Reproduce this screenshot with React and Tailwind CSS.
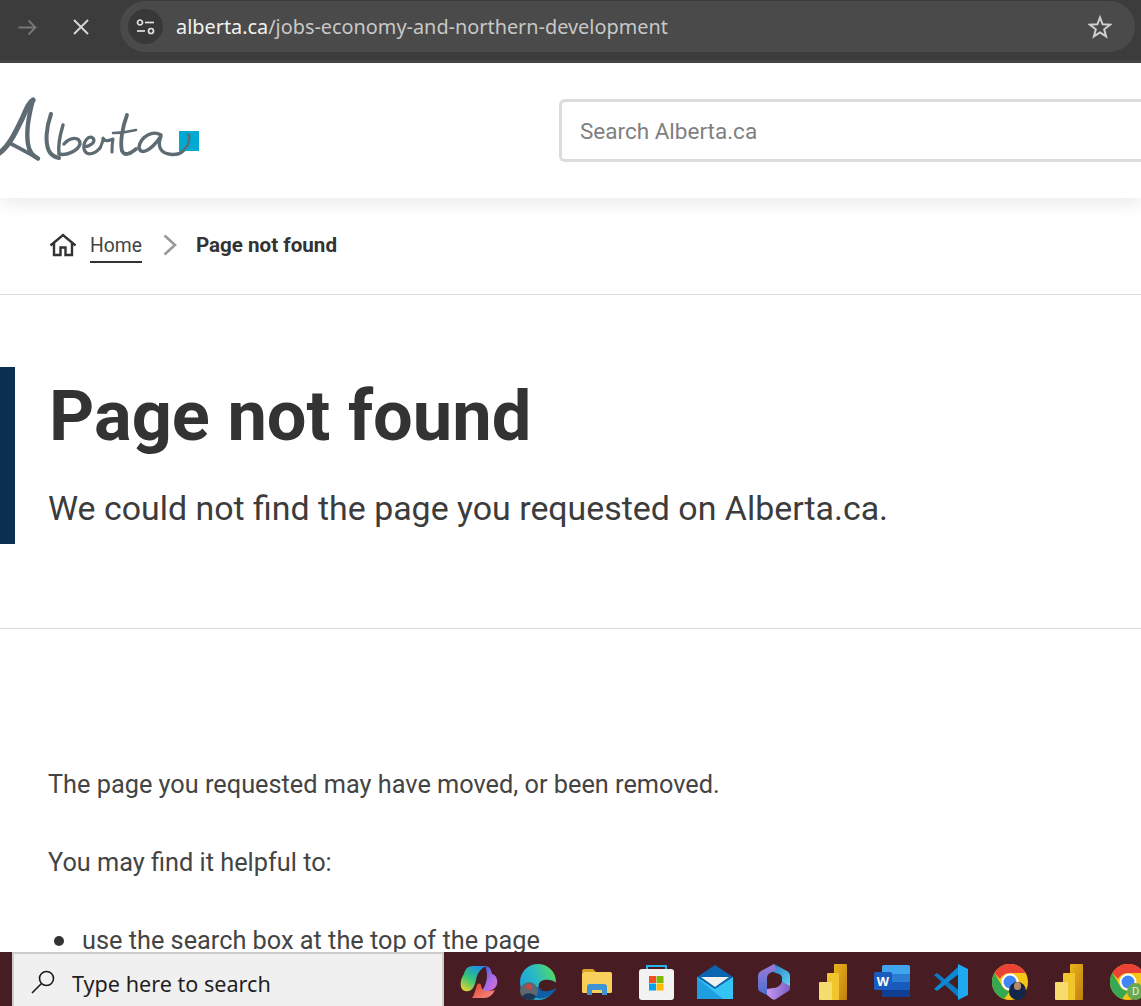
import React from "react";

const roboto = { fontFamily: "Roboto, sans-serif" };

function AlbertaLogo() {
  return (
    <svg width="200" height="70" viewBox="0 0 200 70" className="block">
      <g fill="none" stroke="#5f6b73" strokeLinecap="round" strokeLinejoin="round" transform="translate(0,-96)">
        <path d="M-2 154 C 9 147 16 131 22 119 C 26 110 29 102 33 100" strokeWidth="5.200" />
        <path d="M33 100 C 28 118 26 132 28 144 C 29 151 33 156 38 158.500" strokeWidth="4.400" />
        <path d="M9 143 C 18 147 28 153 38 158.500" strokeWidth="3.600" />
        <path d="M51 114 C 46 128 45 143 49 151 C 51 155 54 157 59 158" strokeWidth="4" />
        <path d="M63 125 C 60 135 58 146 59 154 C 66 156 78 151 80 144 C 80 136 70 137 64 144" strokeWidth="3.400" />
        <path d="M84 147 C 91 146 96 142 93 138 C 88 135 83 142 84 149 C 86 156 94 155 100 148" strokeWidth="3.200" />
        <path d="M100 148 C 102 144 103 140 103 138 C 105 142 108 141 113 139 C 112 144 112 148 112 152" strokeWidth="3" />
        <path d="M127 115 C 122 128 120 143 122 151 C 125 157 131 153 136 149" strokeWidth="3.800" />
        <path d="M113 133 C 120 133 128 132 136 130" strokeWidth="2.600" />
        <path d="M161 135 C 153 130 141 136 139 147 C 140 156 151 151 161 136 C 157 146 160 154 172 154.500 C 180 155 187 150 190 139" strokeWidth="3.400" />
      </g>
      <rect x="179" y="35" width="20" height="20" fill="#00aad2" />
      <path d="M186 37 C 190 42 188 50 179 56 C 187 56 192 47 190 38 Z" fill="#5f6b73" />
    </svg>
  );
}

function Copilot() {
  return (
    <svg width="38" height="34" viewBox="0 0 38 34">
      <defs>
        <linearGradient id="cp1" x1="0.700" y1="0" x2="0.100" y2="1"><stop offset="0" stopColor="#1c8fe8" /><stop offset="0.500" stopColor="#30c47a" /><stop offset="1" stopColor="#f2d52a" /></linearGradient>
        <linearGradient id="cp2" x1="0" y1="0" x2="1" y2="1"><stop offset="0" stopColor="#1d5fd8" /><stop offset="0.500" stopColor="#a36ae8" /><stop offset="1" stopColor="#e06fd0" /></linearGradient>
        <linearGradient id="cp3" x1="0" y1="0" x2="1" y2="1"><stop offset="0" stopColor="#e0402a" /><stop offset="1" stopColor="#fb8f8a" /></linearGradient>
      </defs>
      <path d="M13 1 C7 1 5 5 4 9 C1 13 0 18 1 22 C2 26 6 27 9 26 C13 25 15 20 16 15 C17 9 20 4 26 1 Z" fill="url(#cp1)" />
      <path d="M25 1 C30 1 31 5 32 9 C36 10 38 14 37 19 C36 23 32 26 28 26 H22 C25 21 27 16 27 11 C27 6 26 3 25 1 Z" fill="url(#cp2)" />
      <path d="M12 33 H24 C30 33 33 29 35 25 C32 26 29 26 26 26 C23 26 22 24 21 20 C20 18 18 18 17 20 C15 26 14 31 12 33 Z" fill="url(#cp3)" />
    </svg>
  );
}

function Edge() {
  return (
    <svg width="38" height="38" viewBox="0 0 38 38">
      <defs>
        <linearGradient id="ed1" x1="0" y1="0.800" x2="1" y2="0.400"><stop offset="0" stopColor="#1ba0dc" /><stop offset="0.500" stopColor="#28b8c8" /><stop offset="1" stopColor="#52d86a" /></linearGradient>
      </defs>
      <circle cx="19" cy="19" r="18" fill="url(#ed1)" />
      <path d="M12 30 C16 38 30 38 37 26 L37 22 L18 24 Z" fill="#0e5ea8" />
      <path d="M38 20 C34 17 29 16 25 17 C21 18 19 21 20 24 C21 28 25 29 29 28 C33 27 36 26 38 24 Z" fill="#471c22" />
      <circle cx="10" cy="28" r="9" fill="#5b6a70" />
      <circle cx="10" cy="24" r="3" fill="#c34848" />
      <path d="M3 34 C5 29 15 29 17 34 C14 38 6 38 3 34 Z" fill="#1f3556" />
    </svg>
  );
}

function Explorer() {
  return (
    <svg width="32" height="28" viewBox="0 0 32 28">
      <path d="M1 3 C1 2 2 1 3 1 H12 L15 4 H1 Z" fill="#d9a520" />
      <rect x="1" y="4" width="30" height="21" rx="1.500" fill="#f9cf5c" />
      <path d="M6 27 V19 C6 17 7 16 9 16 H23 C25 16 26 17 26 19 V27 H21 V22 H11 V27 Z" fill="#3d94d4" />
    </svg>
  );
}

function Store() {
  return (
    <svg width="35" height="36" viewBox="0 0 35 36">
      <path d="M8 8 V2 H27 V8" fill="none" stroke="#25b5ea" strokeWidth="2" />
      <rect x="0" y="5" width="35" height="31" rx="3" fill="#f2f2f2" />
      <rect x="10" y="12" width="7" height="7" fill="#f25022" />
      <rect x="17.500" y="12" width="7" height="7" fill="#7fba00" />
      <rect x="10" y="19.500" width="7" height="7" fill="#00a4ef" />
      <rect x="17.500" y="19.500" width="7" height="7" fill="#ffb900" />
    </svg>
  );
}

function Mail() {
  return (
    <svg width="36" height="35" viewBox="0 0 36 35">
      <path d="M0 12 L18 0 L36 12 V14 L18 26 L0 14 Z" fill="#0a64b0" />
      <path d="M4 12 H32 L18 22 Z" fill="#f1f1f1" />
      <path d="M0 12 L18 24 L36 12 V34 H0 Z" fill="#35c4f1" />
      <path d="M0 13 L26 34 H1 C0 34 0 33 0 32 Z" fill="#1f9fe0" />
    </svg>
  );
}

function M365() {
  return (
    <svg width="32" height="36" viewBox="0 0 32 36">
      <defs>
        <linearGradient id="m1" x1="0" y1="0" x2="0" y2="1"><stop offset="0" stopColor="#9c7ad8" /><stop offset="1" stopColor="#4a6fd0" /></linearGradient>
        <linearGradient id="m2" x1="0" y1="0" x2="1" y2="1"><stop offset="0" stopColor="#2576c4" /><stop offset="1" stopColor="#5fd6f2" /></linearGradient>
        <linearGradient id="m3" x1="0" y1="0" x2="1" y2="0"><stop offset="0" stopColor="#c398ee" /><stop offset="1" stopColor="#7b5fc8" /></linearGradient>
      </defs>
      <path d="M16 0 L29 7 C31 8 32 10 32 12 V23 L24 18 V14 C24 12 23 11 21 10 L12 7 Z" fill="url(#m2)" />
      <path d="M16 0 L3 7 C1 8 0 10 0 12 V24 C0 26 1 27 3 28 L9 31 V14 C9 11 11 9 14 8 L19 6 Z" fill="url(#m1)" />
      <path d="M9 25 L15 24 C19 24 22 22 24 18 L32 22 V24 C32 26 31 27 29 28 L18 35 C17 36 15 36 14 35 L9 31 Z" fill="url(#m3)" />
      <circle cx="16" cy="17" r="5.500" fill="#471c22" />
    </svg>
  );
}

function PowerBI() {
  return (
    <svg width="28" height="36" viewBox="0 0 28 36">
      <defs>
        <linearGradient id="pb1" x1="0" y1="0" x2="1" y2="1"><stop offset="0" stopColor="#eab41c" /><stop offset="1" stopColor="#c07f10" /></linearGradient>
      </defs>
      <rect x="15" y="0" width="13" height="36" rx="1" fill="url(#pb1)" />
      <rect x="8" y="9" width="12" height="27" rx="1" fill="#f0c52e" />
      <rect x="0" y="18" width="13" height="18" rx="1" fill="#f6dc6d" />
    </svg>
  );
}

function Word() {
  return (
    <svg width="36" height="34" viewBox="0 0 36 34">
      <rect x="8" y="0" width="28" height="32" rx="2" fill="#2b7cd3" />
      <path d="M8 2 C8 1 9 0 10 0 H34 C35 0 36 1 36 2 V9 H8 Z" fill="#41a5ee" />
      <rect x="8" y="17" width="28" height="8" fill="#185abd" />
      <path d="M8 25 H36 V30 C36 31 35 32 34 32 H10 C9 32 8 31 8 30 Z" fill="#103f91" />
      <rect x="0" y="7" width="18" height="18" rx="1.500" fill="#1a5cbd" />
      <text x="9" y="21" textAnchor="middle" fontSize="13" fontWeight="700" fill="#fff" fontFamily="'Liberation Sans', sans-serif">W</text>
    </svg>
  );
}

function VSCode() {
  return (
    <svg width="36" height="36" viewBox="0 0 36 36">
      <path d="M1 11 L4 9 L27 27 L26 34 Z" fill="#0d79bf" strokeLinejoin="round" />
      <path d="M1 25 L4 27 L27 9 L26 2 Z" fill="#0a89d6" />
      <path d="M25 0 L35 5 V31 L25 36 Z" fill="#1fa9f1" />
    </svg>
  );
}

function Chrome({ badge }) {
  return (
    <span className="relative block w-[36px] h-[36px]">
      <svg width="36" height="36" viewBox="0 0 36 36">
        <circle cx="18" cy="18" r="18" fill="#f5c518" />
        <path d="M18 0 A18 18 0 0 1 33.600 9 H18 C13 9 9.500 12 8 15 L2.400 9 A18 18 0 0 1 18 0 Z" fill="#ea4335" />
        <path d="M2.400 9 L10 22 C12 26 16 27 18 27 L12 35 A18 18 0 0 1 2.400 9 Z" fill="#34a853" />
        <circle cx="18" cy="18" r="8.500" fill="#fff" />
        <circle cx="18" cy="18" r="6.500" fill="#4285f4" />
      </svg>
      {badge}
    </span>
  );
}

function Nav() {
  return (
    <div className="h-[63px] shrink-0 bg-[#3c3c3c] border-b-[3px] border-[#444444] flex items-start">
      <div className="w-[54px] h-[54px] flex items-center justify-center">
        <svg width="19" height="19" viewBox="0 0 19 19" fill="none" stroke="#777777" strokeWidth="1.800">
          <path d="M0.500 9.500 H17.500 M10.500 2.500 L17.500 9.500 L10.500 16.500" />
        </svg>
      </div>
      <div className="w-[54px] h-[54px] flex items-center justify-center">
        <svg width="16" height="16" viewBox="0 0 16 16" fill="none" stroke="#d4d4d4" strokeWidth="2">
          <path d="M1 1 L15 15 M15 1 L1 15" />
        </svg>
      </div>
      <div className="ml-[12px] mt-[1px] w-[1015px] h-[51px] rounded-full bg-[#4a4a4a] flex items-center pl-[8px] pr-[23px]">
        <div className="w-[35px] h-[35px] rounded-full bg-[#383838] flex items-center justify-center">
          <svg width="20" height="16" viewBox="0 0 20 16" fill="none" stroke="#e3e3e3" strokeWidth="1.700">
            <circle cx="4" cy="3.500" r="2.500" />
            <path d="M9 3.500 H18" />
            <path d="M1 12 H9" />
            <circle cx="15" cy="12" r="2.500" />
          </svg>
        </div>
        <div className="ml-[13px] text-[19.880px] leading-none text-[#c7c7c7] flex-1" style={{ fontFamily: "'Noto Sans', sans-serif" }}>
          <span className="text-[#f1f1f1]">alberta.ca</span>/jobs-economy-and-northern-development
        </div>
        <svg width="24" height="24" viewBox="0 0 24 24" fill="none" stroke="#cfcfcf" strokeWidth="2" strokeLinejoin="miter">
          <path d="M12 2.500 L14.600 9.300 L22 9.700 L16.200 14.300 L18.100 21.400 L12 17.400 L5.900 21.400 L7.800 14.300 L2 9.700 L9.400 9.300 Z" />
        </svg>
      </div>
    </div>
  );
}

function Taskbar() {
  const slots = [
    <Copilot key="a" />,
    <Edge key="b" />,
    <Explorer key="c" />,
    <Store key="d" />,
    <Mail key="e" />,
    <M365 key="f" />,
    <PowerBI key="g" />,
    <Word key="h" />,
    <VSCode key="i" />,
    <Chrome key="j" badge={
      <span className="absolute left-[17px] top-[18px] w-[17px] h-[18px] rounded-full bg-[#14274a] overflow-hidden flex justify-center">
        <span className="w-[7px] h-[8px] rounded-full bg-[#b58a6a]" />
      </span>
    } />,
    <PowerBI key="k" />,
    <Chrome key="l" badge={
      <span className="absolute left-[17px] top-[19px] w-[17px] h-[17px] rounded-full bg-[#6aa84f] text-[11px] leading-[17px] text-center text-[#e8f0e0]" style={roboto}>D</span>
    } />,
  ];
  return (
    <div className="h-[54px] shrink-0 bg-[#471c22] flex overflow-hidden">
      <div className="ml-[12px] w-[432px] h-[54px] bg-[#f0f0f0] border-l-[2px] border-r-[2px] border-t-[2px] border-[#cccccc] flex items-center pl-[16px] pt-[4px] shrink-0">
        <svg width="26" height="26" viewBox="0 0 26 26" fill="none" stroke="#1a1a1a" strokeWidth="1.600">
          <circle cx="16.500" cy="9.500" r="7" />
          <path d="M11.500 14.500 L2 24" />
        </svg>
        <span className="ml-[16px] pt-[3px] text-[21.600px] leading-none text-[#1f1f1f]" style={{ fontFamily: "'Noto Sans', sans-serif" }}>Type here to search</span>
      </div>
      <div className="flex ml-[5.500px] items-center pt-[6px]">
        {slots.map((el, i) => (
          <span key={i} className="w-[59px] h-[48px] shrink-0 flex items-center justify-center">{el}</span>
        ))}
      </div>
    </div>
  );
}

export default function App() {
  return (
    <div className="w-[1141px] h-[1006px] overflow-hidden flex flex-col bg-white text-[#333333]" style={roboto}>
      <Nav />
      <div className="flex-1 overflow-hidden flex flex-col">
        <header className="h-[135px] shrink-0 bg-white flex items-center relative shadow-[0_6px_16px_rgba(0,0,0,0.08)]">
          <div className="w-[559px] shrink-0 h-[70px]">
            <AlbertaLogo />
          </div>
          <div className="flex-1 h-[63px] border-[3px] border-r-0 border-[#dcdcdc] rounded-l-[6px] flex items-center pl-[18px] pt-[3px] text-[22.500px] text-[#808080] font-normal">
            Search Alberta.ca
          </div>
        </header>
        <nav className="h-[97px] shrink-0 border-b border-[#dcdcdc] flex items-center pl-[49px] pb-[2px]">
          <svg width="28" height="24" viewBox="0 0 28 24" fill="none" stroke="#333333" strokeWidth="2.400" strokeLinejoin="miter">
            <path d="M1.500 12.500 L14 2 L26.500 12.500" />
            <path d="M5 10 V22 H11.500 V14.500 H16.500 V22 H23 V10" />
          </svg>
          <span className="ml-[13px] text-[19.300px] leading-[37px] h-[36px] border-b-2 border-[#333333] font-normal text-[#444444]">Home</span>
          <svg className="ml-[21px]" width="14" height="22" viewBox="0 0 14 22" fill="none" stroke="#999999" strokeWidth="2.600">
            <path d="M1.500 1.500 L12 11 L1.500 20.500" />
          </svg>
          <span className="ml-[19px] text-[20.600px] font-bold">Page not found</span>
        </nav>
        <section className="h-[334px] shrink-0 border-b border-[#dcdcdc] pt-[72px]">
          <div className="h-[177px] border-l-[15px] border-[#0a2f50] pl-[34px]">
            <h1 className="text-[70.400px] font-bold leading-[98px]">Page not found</h1>
            <p className="mt-[22px] text-[33.900px] leading-[44px] font-normal -ml-[1px] text-[#3c3c3c]">We could not find the page you requested on Alberta.ca.</p>
          </div>
        </section>
        <main className="pl-[48px] pt-[139px] text-[25.300px] font-normal leading-[34px] text-[#444444]">
          <p>The page you requested may have moved, or been removed.</p>
          <p className="mt-[44px]">You may find it helpful to:</p>
          <ul className="mt-[44px]">
            <li className="flex items-center">
              <span className="ml-[6px] w-[10px] h-[10px] rounded-full bg-[#333333] shrink-0" />
              <span className="ml-[18px]">use the search box at the top of the page</span>
            </li>
          </ul>
        </main>
      </div>
      <Taskbar />
    </div>
  );
}
